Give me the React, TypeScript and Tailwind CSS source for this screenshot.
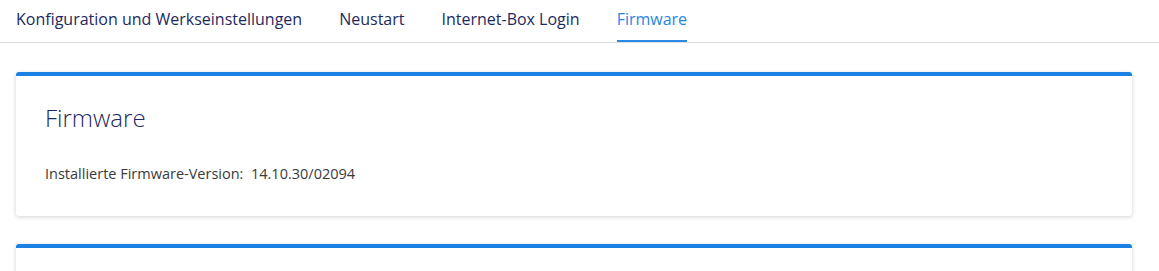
export default function App() {
  const tabs = ["Konfiguration und Werkseinstellungen", "Neustart", "Internet-Box Login", "Firmware"]
  const active = "Firmware"

  return (
    <div className="h-[271px] bg-white font-['Open_Sans',sans-serif] overflow-hidden">
      <nav className="flex gap-[37px] px-4 border-b border-[#dcdcdc] h-[43px]">
        {tabs.map((t) => (
          <div
            key={t}
            className={
              t === active
                ? "flex items-center text-[16px] text-[#1f86e6] border-b-2 border-[#2a8ae6] pb-[2px]"
                : "flex items-center text-[16px] text-[#1d2a61] border-b-2 border-transparent pb-[2px]"
            }
          >
            {t}
          </div>
        ))}
      </nav>

      <div className="ml-4 mr-[27px] pt-[29px] flex flex-col gap-[28px]">
        <section className="bg-white border-t-4 border-[#1a80e3] rounded-[3px] shadow-[0_1px_4px_rgba(0,0,0,0.18)] h-[144px] px-[29px]">
          <h2 className="pt-[27px] text-[24px] font-light text-[#1d2a61] leading-[30px]">Firmware</h2>
          <p className="mt-[30px] text-[14.5px] text-[#3a3a3a]">
            Installierte Firmware-Version:&nbsp;&nbsp;14.10.30/02094
          </p>
        </section>
        <section className="bg-white border-t-4 border-[#1a80e3] rounded-[3px] shadow-[0_1px_4px_rgba(0,0,0,0.18)] h-[60px]" />
      </div>
    </div>
  )
}
